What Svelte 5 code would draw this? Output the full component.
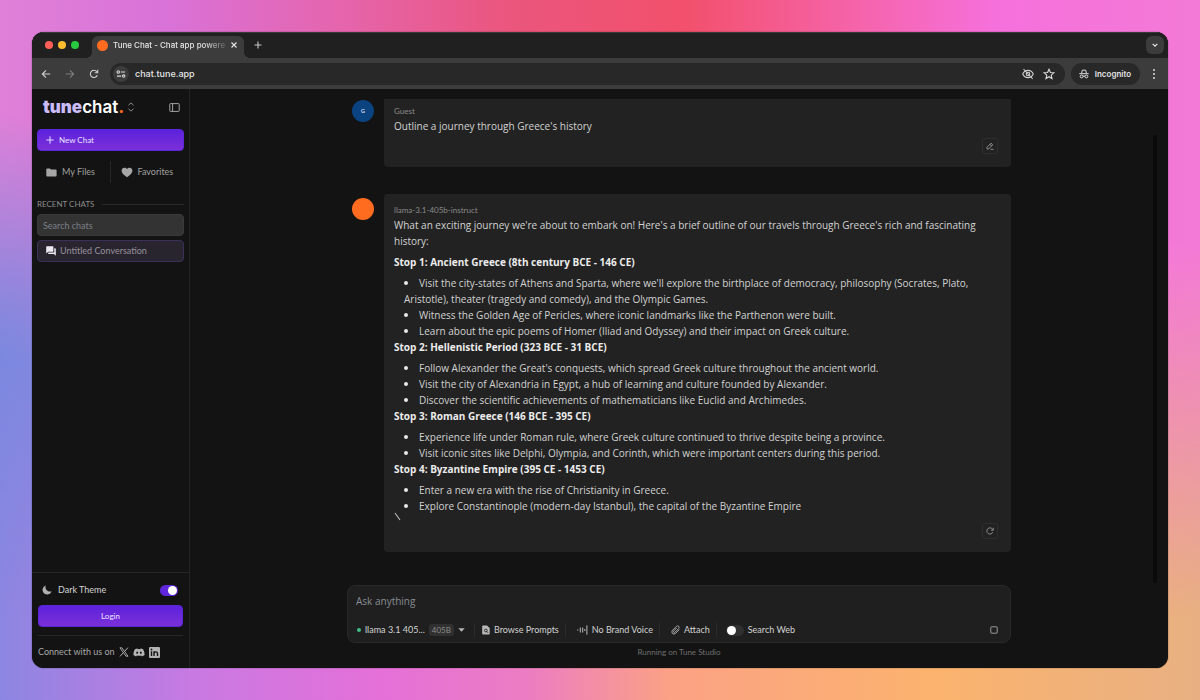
<script>
  const stops = [
    {
      title: 'Stop 1: Ancient Greece (8th century BCE - 146 CE)',
      items: [
        "Visit the city-states of Athens and Sparta, where we'll explore the birthplace of democracy, philosophy (Socrates, Plato, Aristotle), theater (tragedy and comedy), and the Olympic Games.",
        'Witness the Golden Age of Pericles, where iconic landmarks like the Parthenon were built.',
        'Learn about the epic poems of Homer (Iliad and Odyssey) and their impact on Greek culture.'
      ]
    },
    {
      title: 'Stop 2: Hellenistic Period (323 BCE - 31 BCE)',
      items: [
        "Follow Alexander the Great's conquests, which spread Greek culture throughout the ancient world.",
        'Visit the city of Alexandria in Egypt, a hub of learning and culture founded by Alexander.',
        'Discover the scientific achievements of mathematicians like Euclid and Archimedes.'
      ]
    },
    {
      title: 'Stop 3: Roman Greece (146 BCE - 395 CE)',
      items: [
        'Experience life under Roman rule, where Greek culture continued to thrive despite being a province.',
        'Visit iconic sites like Delphi, Olympia, and Corinth, which were important centers during this period.'
      ]
    },
    {
      title: 'Stop 4: Byzantine Empire (395 CE - 1453 CE)',
      items: [
        'Enter a new era with the rise of Christianity in Greece.',
        'Explore Constantinople (modern-day Istanbul), the capital of the Byzantine Empire'
      ]
    }
  ];

  let dark = $state(true);
  let web = $state(false);
</script>

<div class="desktop">
  <div class="window">
    <header class="tabstrip">
      <div class="lights"><i class="red"></i><i class="yellow"></i><i class="green"></i></div>
      <div class="tab">
        <span class="favicon"></span>
        <span class="tab-title">Tune Chat - Chat app powere</span>
        <button class="plain" aria-label="Close tab">
          <svg width="8" height="8" viewBox="0 0 8 8" fill="none" stroke="#e2e2e2" stroke-width="1.2"><path d="M1.5 1.5l5 5M6.5 1.5l-5 5" /></svg>
        </button>
      </div>
      <button class="plain newtab" aria-label="New tab">
        <svg width="8" height="8" viewBox="0 0 8 8" fill="none" stroke="#c8c8c8" stroke-width="1.1"><path d="M4 .5v7M.5 4h7" /></svg>
      </button>
      <button class="tabsearch" aria-label="Search tabs">
        <svg width="8" height="8" viewBox="0 0 8 8" fill="none" stroke="#e8e8e8" stroke-width="1.2"><path d="M1.7 2.8L4 5.1l2.3-2.3" /></svg>
      </button>
    </header>

    <nav class="toolbar">
      <button class="plain" aria-label="Back">
        <svg width="10" height="10" viewBox="0 0 10 10" fill="none" stroke="#d0d0d0" stroke-width="1.1"><path d="M9.2 5H1.4M5 1.3L1.3 5 5 8.7" /></svg>
      </button>
      <button class="plain" aria-label="Forward">
        <svg width="10" height="10" viewBox="0 0 10 10" fill="none" stroke="#7d7d7d" stroke-width="1.1"><path d="M.8 5h7.8M5 1.3L8.7 5 5 8.7" /></svg>
      </button>
      <button class="plain" aria-label="Reload">
        <svg width="10" height="10" viewBox="0 0 10 10" fill="none" stroke="#d0d0d0" stroke-width="1.1"><path d="M8.3 6.2A3.6 3.6 0 1 1 7.7 2.6L8.6 3.6" /><path d="M8.7 .8v3H5.7" /></svg>
      </button>
      <div class="address">
        <span class="site">
          <svg width="10" height="10" viewBox="0 0 10 10" fill="none" stroke="#d8d8d8" stroke-width="1.1"><circle cx="2.3" cy="3" r="1.2" /><path d="M4.8 3h4.2M1 7.1h4.2" /><circle cx="7.7" cy="7.1" r="1.2" /></svg>
        </span>
        <input class="url" aria-label="Address" value="chat.tune.app" />
        <svg width="12" height="12" viewBox="0 0 12 12" fill="none" stroke="#d0d0d0" stroke-width="1.1"><path d="M.7 6C1.8 3.7 3.7 2.4 6 2.4S10.2 3.7 11.3 6C10.2 8.3 8.3 9.6 6 9.6S1.8 8.3.7 6z" /><circle cx="6" cy="6" r="1.8" /><path d="M1.5 1l9.2 10" /></svg>
        <svg width="12" height="12" viewBox="0 0 12 12" fill="none" stroke="#dadada" stroke-width="1.1"><path d="M6 1.3l1.4 3.2 3.5.3-2.7 2.3.8 3.4L6 8.7l-3 1.8.8-3.4L1.1 4.8l3.5-.3z" /></svg>
      </div>
      <div class="incognito">
        <svg width="10" height="10" viewBox="0 0 10 10" fill="none" stroke="#e0e0e0" stroke-width="1"><path d="M2.7 4L3.3 1.2h3.4L7.3 4" /><path d="M.3 4.7h9.4" /><circle cx="2.6" cy="7.5" r="1.4" /><circle cx="7.4" cy="7.5" r="1.4" /><path d="M4 7.2h2" /></svg>
        <span>Incognito</span>
      </div>
      <button class="plain menu" aria-label="Browser menu">
        <svg width="4" height="12" viewBox="0 0 4 12" fill="#d8d8d8"><circle cx="2" cy="2" r="1" /><circle cx="2" cy="6" r="1" /><circle cx="2" cy="10" r="1" /></svg>
      </button>
    </nav>

    <div class="app">
      <aside class="sidebar">
        <div class="brand">
          <span class="logo"><b>tune</b>chat<em>.</em></span>
          <button class="plain" aria-label="Switch product">
            <svg width="8" height="10" viewBox="0 0 8 10" fill="none" stroke="#8d8d8d" stroke-width="1"><path d="M1.5 3.2L4 .9l2.5 2.3M1.5 6.8L4 9.1l2.5-2.3" /></svg>
          </button>
          <button class="plain collapse" aria-label="Collapse sidebar">
            <svg width="11" height="9" viewBox="0 0 11 9" fill="none" stroke="#a2a2a2" stroke-width="1"><rect x=".8" y=".6" width="9.4" height="7.8" rx=".6" /><path d="M3.6.6v7.8" /></svg>
          </button>
        </div>

        <button class="primary new">
          <svg width="8" height="8" viewBox="0 0 8 8" fill="none" stroke="#e4dcff" stroke-width="1"><path d="M4 .3v7.4M.3 4h7.4" /></svg>
          New Chat
        </button>

        <div class="links">
          <a href="#files">
            <svg width="11" height="9" viewBox="0 0 11 9" fill="#a6a6a6"><path d="M.3 1.3q0-.9.9-.9h2.7l1.2 1.2h4.6q.9 0 .9.9v5q0 .9-.9.9H1.2q-.9 0-.9-.9z" /></svg>
            My Files
          </a>
          <span class="rule"></span>
          <a class="fav" href="#favorites">
            <svg width="12" height="11" viewBox="0 0 12 11" fill="#a6a6a6"><path d="M6 10.3C2.5 7.7.6 5.9.6 3.7.6 2 1.900.7 3.500.7 4.500.7 5.400 1.200 6 2 6.600 1.200 7.500.7 8.500.7c1.600 0 2.900 1.300 2.900 3 0 2.200-1.900 4-5.400 6.600z" /></svg>
            Favorites
          </a>
        </div>

        <div class="recent"><span>RECENT CHATS</span><hr /></div>
        <input class="search" aria-label="Search chats" placeholder="Search chats" />
        <a class="conversation" href="#untitled">
          <svg width="10" height="10" viewBox="0 0 10 10" fill="#eeeaf4"><path d="M.2.8q0-.6.6-.6h6q.6 0 .6.6v4.300q0 .6-.6.6H2.200L.2 7.600z" /><path d="M8.300 2.300h.9q.6 0 .6.6v6.900L7.900 8H2.800q-.6 0-.6-.6v-.8h5.500q.6 0 .6-.6z" /></svg>
          Untitled Conversation
        </a>

        <footer class="side-foot">
          <label class="theme">
            <svg width="10" height="10" viewBox="0 0 10 10" fill="#b0b0b0"><path d="M3.800.5A4.600 4.600 0 1 0 9.600 6.200 4.400 4.400 0 0 1 3.800.5z" /></svg>
            <span>Dark Theme</span>
            <input type="checkbox" class="switch" bind:checked={dark} />
          </label>
          <button class="primary login">Login</button>
          <div class="social">
            <span>Connect with us on</span>
            <a href="#x" aria-label="X">
              <svg width="10" height="10" viewBox="0 0 10 10" fill="none" stroke="#b4b4b4"><path d="M.9.8h2L9 9.200H7z" stroke-width=".9" /><path d="M8.900.6L5.500 4.500M4.300 5.700L1 9.400" stroke-width="1" /></svg>
            </a>
            <a href="#discord" aria-label="Discord">
              <svg width="12" height="9" viewBox="0 0 12 9" fill="#b4b4b4"><path fill-rule="evenodd" d="M4.300.4L4.700 1.200q1.300-.2 2.600 0L7.700.4q1.300.2 2.400.8 1.700 2.800 1.500 5.800-1.200 1-2.700 1.400l-.7-1q-2.200.7-4.400 0l-.7 1Q1.600 8 .4 7 .2 4 1.900 1.200 3 .6 4.300.4zM4.200 3.600a1 1.100 0 1 0 .01 0zM7.800 3.600a1 1.100 0 1 0 .01 0z" /></svg>
            </a>
            <a href="#linkedin" aria-label="LinkedIn">
              <svg width="11" height="11" viewBox="0 0 11 11"><rect width="11" height="11" rx="1.200" fill="#b4b4b4" /><g fill="none" stroke="#161616" stroke-width="1.400"><path d="M2.500 4.300v4.700M5 4.300v4.700M5 6.300Q5.200 4.900 6.800 4.900 8.500 4.900 8.500 6.600V9" /></g><circle cx="2.500" cy="2.500" r=".9" fill="#161616" /></svg>
            </a>
          </div>
        </footer>
      </aside>

      <main class="main">
        <div class="scroll">
          <section class="message first">
            <span class="avatar guest">G</span>
            <article class="card">
              <div class="who">Guest</div>
              <p>Outline a journey through Greece's history</p>
              <button class="action" aria-label="Edit message">
                <svg width="8" height="8" viewBox="0 0 8 8" fill="none" stroke="#9a9a9a" stroke-width=".9"><path d="M1 5.300L5 1.200l1.700 1.600L2.800 6.900 1 7zM4 2.300L5.600 4M4.500 7.300h3" /></svg>
              </button>
            </article>
          </section>

          <section class="message">
            <span class="avatar bot"></span>
            <article class="card">
              <div class="who">llama-3.1-405b-instruct</div>
              <p>What an exciting journey we're about to embark on! Here's a brief outline of our travels through Greece's rich and fascinating history:</p>
              <div class="outline">
                {#each stops as stop}
                  <h3>{stop.title}</h3>
                  <ul>
                    {#each stop.items as item}
                      <li>{item}</li>
                    {/each}
                  </ul>
                {/each}
              </div>
              <svg class="cursor" width="8" height="9" viewBox="0 0 8 9" fill="none" stroke="#bdbdbd" stroke-width="1.100"><path d="M1 1l5 7" /></svg>
              <button class="action" aria-label="Regenerate">
                <svg width="8" height="8" viewBox="0 0 8 8" fill="none" stroke="#9a9a9a" stroke-width=".9"><path d="M6.800 5.200A3.100 3.100 0 1 1 6.500 2.200L7.100 3" /><path d="M7.300.8v2.400H5" /></svg>
              </button>
            </article>
          </section>
        </div>

        <form class="composer">
          <input class="ask" aria-label="Message" placeholder="Ask anything" />
          <div class="tools">
            <button type="button" class="tool model">
              <i class="dot"></i>
              <span>llama 3.1 405...</span>
              <span class="badge">405B</span>
              <svg width="7" height="4" viewBox="0 0 7 4" fill="#b5b5b5"><path d="M.3.2h6.400L3.500 3.800z" /></svg>
            </button>
            <button type="button" class="tool">
              <svg width="8" height="10" viewBox="0 0 8 10"><path d="M1 .5h4L7.700 3v5.700q0 .8-.8.800H1q-.8 0-.8-.8V1.300Q.2.500 1 .500z" fill="#b8b8b8" /><circle cx="3.900" cy="5.500" r="1.400" fill="none" stroke="#222" stroke-width=".9" /><path d="M4.900 6.500l1.300 1.400" stroke="#222" stroke-width=".8" /></svg>
              Browse Prompts
            </button>
            <button type="button" class="tool voice">
              <svg width="11" height="10" viewBox="0 0 11 10" fill="none" stroke="#b8b8b8" stroke-width="1"><path d="M.8 4.400v1.200M3.300 2.500v5M5.700 2.500v5M7.800 4v2M9.900 .3v9.400" /></svg>
              No Brand Voice
            </button>
            <button type="button" class="tool attach">
              <svg width="9" height="10" viewBox="0 0 9 10" fill="none" stroke="#b8b8b8" stroke-width=".9"><path d="M8.300 4.500L4.700 8.300Q3 9.800 1.500 8.500.1 7 1.500 5.300L5.400 1.400Q6.600.3 7.700 1.300 8.700 2.400 7.600 3.600L4.100 7.200Q3.300 7.800 2.700 7.200 2.200 6.600 2.800 5.900L5.700 2.900" /></svg>
              Attach
            </button>
            <label class="web"><input type="checkbox" class="switch" bind:checked={web} />Search Web</label>
            <button type="button" class="plain stop" aria-label="Stop">
              <svg width="8" height="8" viewBox="0 0 8 8" fill="none" stroke="#9c9c9c" stroke-width="1"><rect x=".8" y=".8" width="6.400" height="6.400" rx=".5" /></svg>
            </button>
          </div>
        </form>
        <div class="powered">Running on Tune Studio</div>
        <div class="scrollbar"></div>
      </main>
    </div>
  </div>
</div>

<style>
  :global(body) { margin: 0; }
  .desktop, .desktop * { box-sizing: border-box; }
  .desktop {
    position: relative;
    min-height: 100vh;
    padding: 32px;
    display: flex;
    font-family: "Open Sans", sans-serif;
    font-size: 10px;
    line-height: 16px;
    color: #d2d2d2;
    background: linear-gradient(90deg, #8c86e2, #cb79e2 17%, #e570d8 32%, #ec7dc2 44%, #fba284 56%, #fbb36e 78%, #e8b082);
  }
  .desktop::before {
    content: "";
    position: absolute;
    inset: 0;
    background:
      radial-gradient(ellipse 16% 50% at 0 66%, #7589dd 0 30%, transparent),
      linear-gradient(90deg, #e080d8, #d972d8 14%, #e565ae 28%, #ea567e 42%, #f2506b 57%, #f562a4 70%, #f670dc 83%, #f37ad6);
    mask-image: linear-gradient(#000 35%, transparent 88%);
  }
  button, input { font: inherit; color: inherit; }
  button { cursor: pointer; }
  a { color: inherit; text-decoration: none; }
  svg { display: block; flex: none; }
  .plain { background: none; border: 0; padding: 0; display: flex; }
  .window {
    position: relative;
    flex: 1;
    min-width: 0;
    display: flex;
    flex-direction: column;
    overflow: hidden;
    border-radius: 12px;
    background: #131313;
    box-shadow: 0 0 1px #000;
  }

  .tabstrip {
    height: 26px;
    flex: none;
    display: flex;
    align-items: center;
    padding: 0 4px 0 13px;
    background: #202020;
    box-shadow: inset 0 1px #393939;
    font-family: Inter, sans-serif;
  }
  .lights { display: flex; gap: 5px; width: 47px; }
  .lights i { width: 8px; height: 8px; border-radius: 50%; }
  .red { background: #ff5f57; }
  .yellow { background: #febc2e; }
  .green { background: #28c840; }
  .tab {
    position: relative;
    align-self: flex-end;
    width: 152px;
    height: 22px;
    padding: 0 6px 4px 5px;
    display: flex;
    align-items: center;
    border-radius: 6px 6px 0 0;
    background: #3c3c3c;
    color: #e4e4e4;
    font-size: 8px;
    font-weight: 500;
  }
  .tab::before, .tab::after {
    content: "";
    position: absolute;
    bottom: 0;
    width: 6px;
    height: 6px;
  }
  .tab::before { left: -6px; background: radial-gradient(circle at 0 0, transparent 6px, #3c3c3c 6px); }
  .tab::after { right: -6px; background: radial-gradient(circle at 100% 0, transparent 6px, #3c3c3c 6px); }
  .favicon { width: 11px; height: 11px; flex: none; border-radius: 50%; background: #ff6b1f; }
  .tab-title {
    flex: 1;
    margin-left: 5px;
    white-space: nowrap;
    mask-image: linear-gradient(90deg, #000 78%, transparent);
  }
  .newtab { margin-left: 10px; }
  .tabsearch {
    margin-left: auto;
    width: 18px;
    height: 18px;
    padding: 0;
    border: 0;
    border-radius: 6px;
    background: #3c3c3c;
    display: grid;
    place-items: center;
  }

  .toolbar {
    height: 31px;
    flex: none;
    display: flex;
    align-items: center;
    gap: 14px;
    padding: 0 12px 0 9px;
    background: #3c3c3c;
    font-family: Inter, sans-serif;
  }
  .address {
    flex: 1;
    height: 22px;
    margin: 0 -8px 0 -3px;
    padding: 0 10px 0 3px;
    display: flex;
    align-items: center;
    gap: 9px;
    border-radius: 11px;
    background: #282828;
  }
  .site {
    width: 16px;
    height: 16px;
    display: grid;
    place-items: center;
    border-radius: 50%;
    background: #3c3c3c;
    margin-right: -3px;
  }
  .url { flex: 1; min-width: 0; border: 0; outline: 0; padding: 0; background: none; color: #e6e6e6; font-size: 9px; font-weight: 500; }
  .incognito {
    height: 22px;
    padding: 0 9px 0 8px;
    display: flex;
    align-items: center;
    gap: 6px;
    border-radius: 11px;
    background: #282828;
    color: #e4e4e4;
    font-size: 8px;
    font-weight: 600;
  }
  .menu { margin-left: -2px; }

  .app { flex: 1; min-height: 0; display: flex; }
  .sidebar {
    width: 158px;
    flex: none;
    display: flex;
    flex-direction: column;
    padding: 8px 5px 0;
    border-right: 1px solid #232323;
    color: #a0a0a0;
    font-family: Lato, sans-serif;
    font-size: 9px;
  }
  .brand { display: flex; align-items: center; height: 20px; padding: 0 4px 0 6px; gap: 3px; }
  .logo { font-family: Inter, sans-serif; font-size: 17px; line-height: 20px; font-weight: 600; color: #fff; }
  .logo b { font-weight: 900; color: #cbbcf8; }
  .logo em { font-style: normal; font-weight: 800; color: #ff6b1f; }
  .collapse { margin-left: auto; }
  .primary {
    height: 22px;
    border: 1px solid #5a26d8;
    border-radius: 4px;
    background: linear-gradient(#5c22dc, #7b30d8);
    color: #ebe4ff;
    font-size: 8px;
    display: flex;
    align-items: center;
    justify-content: center;
    gap: 5px;
  }
  .new { margin-top: 12px; justify-content: flex-start; padding: 0 8px; }
  .links { display: flex; align-items: center; height: 22px; margin-top: 10px; }
  .links a { flex: 1; display: flex; align-items: center; gap: 5px; padding-left: 9px; }
  .links .fav { padding-left: 10px; }
  .rule { width: 1px; height: 22px; background: #262626; }
  .recent { display: flex; align-items: center; gap: 8px; height: 16px; margin-top: 13px; font-size: 8px; color: #8c8c8c; }
  .recent hr { flex: 1; height: 1px; margin: 0; border: 0; background: #292929; }
  .search {
    height: 22px;
    margin-top: 2px;
    padding: 0 5px;
    border: 1px solid #3a3a3a;
    border-radius: 4px;
    background: #333;
    outline: 0;
  }
  .search::placeholder { color: #7b7f88; opacity: 1; }
  .conversation {
    display: flex;
    align-items: center;
    gap: 4px;
    height: 22px;
    margin-top: 4px;
    padding: 0 8px;
    border: 1px solid #3b3059;
    border-radius: 4px;
    background: #29252f;
    color: #96929c;
  }
  .side-foot { margin: auto -5px 0; padding: 9px 6px 8px; border-top: 1px solid #272727; }
  .theme { display: flex; align-items: center; gap: 6px; height: 16px; padding: 0 5px 0 4px; color: #d4d4d4; }
  .switch {
    appearance: none;
    width: 18px;
    height: 11px;
    margin: 0;
    padding: 1px;
    flex: none;
    display: flex;
    border-radius: 6px;
    background: #303030;
  }
  .switch::before { content: ""; width: 9px; height: 9px; border-radius: 50%; background: #fff; }
  .switch:checked { background: #5f27dd; justify-content: flex-end; }
  .theme .switch { margin-left: auto; }
  .login { width: 100%; margin-top: 7px; }
  .social { display: flex; align-items: center; gap: 4px; margin-top: 8px; padding-top: 8px; border-top: 1px solid #272727; color: #a8a8a8; height: 25px; }

  .main {
    position: relative;
    flex: 1;
    min-width: 0;
    display: flex;
    flex-direction: column;
    padding: 10px 20px 8px;
  }
  .scroll, .composer { width: 100%; max-width: 664px; margin: 0 auto; }
  .scroll { flex: 1; min-height: 0; padding-left: 5px; overflow: hidden; }
  .message { display: flex; align-items: flex-start; gap: 10px; margin-bottom: 27px; }
  .avatar { width: 22px; height: 22px; margin-top: 4px; flex: none; border-radius: 50%; }
  .guest { margin-top: 1px; background: #0b4380; color: #d5deea; font-size: 6px; font-weight: 600; line-height: 22px; text-align: center; }
  .bot { background: #ff6b1f; }
  .card {
    flex: 1;
    min-width: 0;
    display: flex;
    flex-direction: column;
    padding: 10px 13px 13px 10px;
    border-radius: 4px;
    background: #222;
  }
  .first .card { padding-top: 6px; border-radius: 0 0 4px 4px; }
  .who { font-family: Lato, sans-serif; font-size: 8px; line-height: 13px; color: #8a8a8a; }
  p { margin: 0; }
  h3 { margin: 5px 0; font-size: 10px; line-height: 16px; font-weight: 700; color: #ececec; }
  ul { margin: 0; padding: 0 0 0 10px; list-style: none; }
  ul + h3 { margin-top: 0; }
  li::before {
    content: "";
    display: inline-block;
    width: 4px;
    height: 4px;
    margin-right: 11px;
    border-radius: 50%;
    background: #e8e8e8;
    vertical-align: 2px;
  }
  .action {
    width: 16px;
    height: 16px;
    margin-top: 4px;
    padding: 0;
    align-self: flex-end;
    display: grid;
    place-items: center;
    border: 1px solid #2e2e2e;
    border-radius: 3px;
    background: none;
  }
  .cursor { margin: -2px 0; }

  .composer {
    height: 58px;
    flex: none;
    padding: 7px 12px 4px 8px;
    border: 1px solid #292929;
    border-radius: 8px;
    background: #1f1f1f;
  }
  .ask { display: block; width: 100%; height: 16px; padding: 0; border: 0; outline: 0; background: none; }
  .ask::placeholder { color: #898d94; opacity: 1; }
  .tools { display: flex; align-items: center; height: 16px; margin-top: 13px; font-family: Lato, sans-serif; font-size: 9px; }
  .tool {
    display: flex;
    align-items: center;
    gap: 4px;
    height: 14px;
    padding: 0 6px 0 7px;
    border: 0;
    border-right: 1px solid #2b2b2b;
    background: none;
    white-space: nowrap;
  }
  .model { padding: 0 9px 0 1px; }
  .voice, .attach { padding-left: 11px; }
  .dot { width: 4px; height: 4px; border-radius: 50%; background: #42bd86; }
  .badge { padding: 0 3px; border-radius: 3px; background: #303030; color: #8c8c8c; font-size: 8px; line-height: 12px; }
  .web { display: flex; align-items: center; gap: 4px; padding-left: 9px; }
  .stop { margin-left: auto; }
  .powered { height: 17px; padding-top: 1px; text-align: center; font-family: Lato, sans-serif; font-size: 8px; color: #6f6f6f; }
  .scrollbar { position: absolute; right: 11px; top: 46px; bottom: 85px; width: 4px; border-radius: 2px; background: #0a0a0a; }
</style>
